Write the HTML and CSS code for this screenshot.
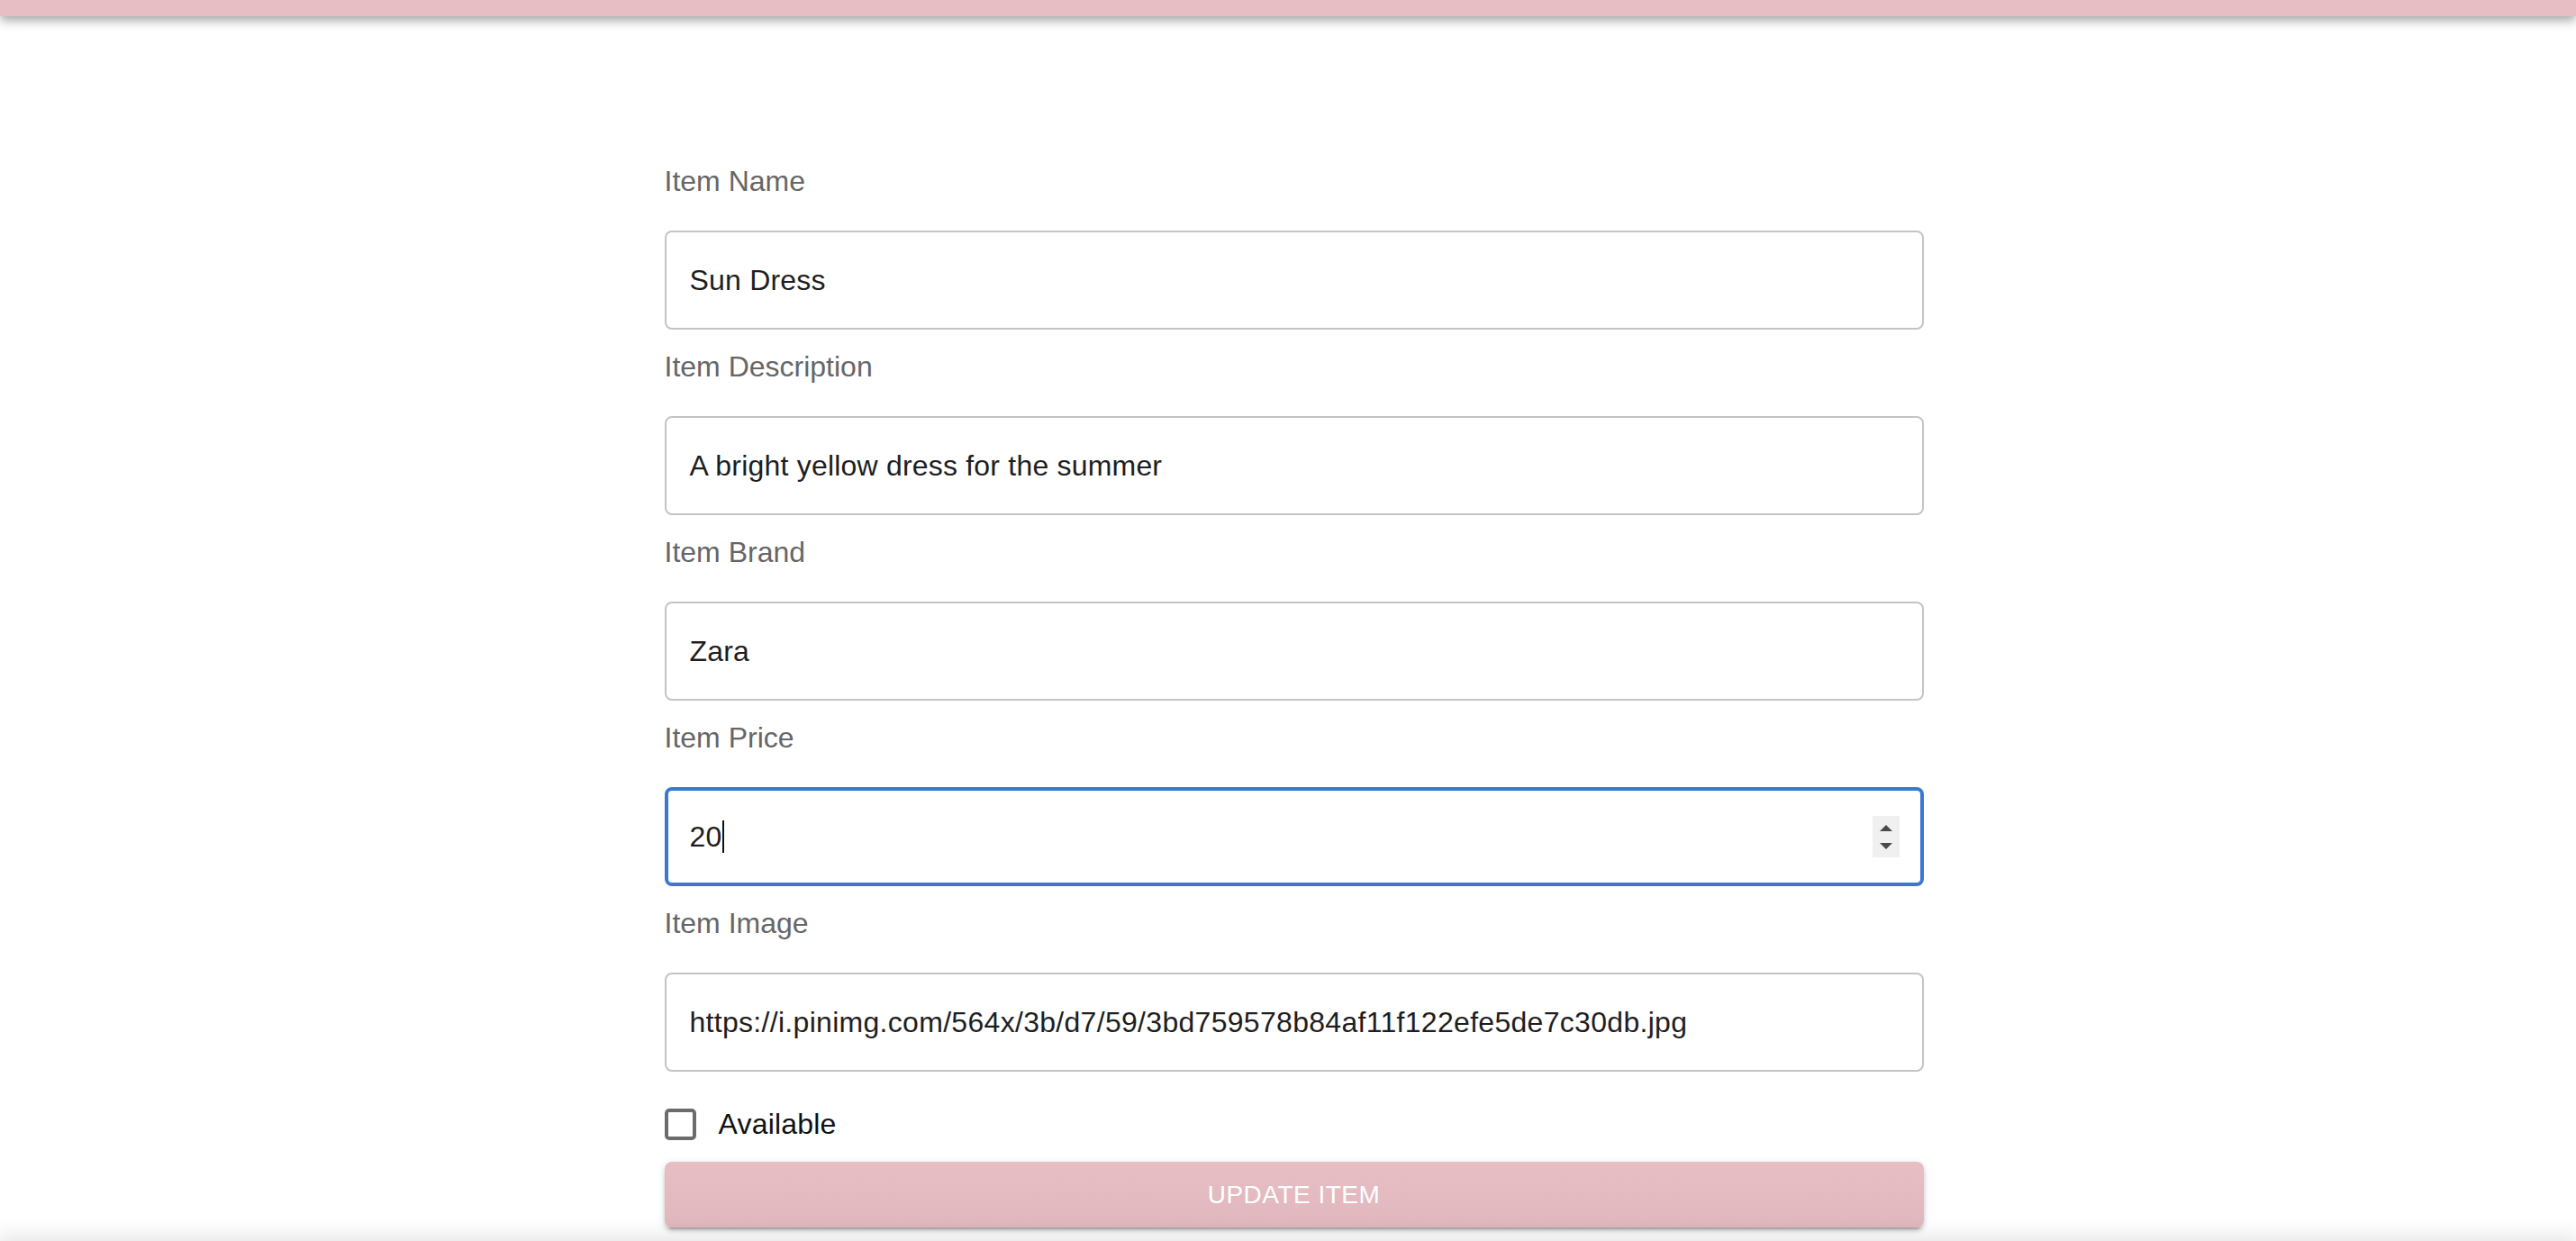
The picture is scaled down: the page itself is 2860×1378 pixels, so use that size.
FILE: index.html
```html
<!DOCTYPE html>
<html lang="en">
<head>
<meta charset="utf-8">
<title>Update Item</title>
<link rel="stylesheet" href="styles.css">
</head>
<body>
<header class="appbar"></header>
<main class="page">
  <form class="form">
    <div class="field">
      <label class="label">Item Name</label>
      <div class="input"><span class="value">Sun Dress</span></div>
    </div>
    <div class="field">
      <label class="label">Item Description</label>
      <div class="input"><span class="value">A bright yellow dress for the summer</span></div>
    </div>
    <div class="field">
      <label class="label">Item Brand</label>
      <div class="input"><span class="value">Zara</span></div>
    </div>
    <div class="field">
      <label class="label">Item Price</label>
      <div class="input focused">
        <span class="value">20</span><span class="caret"></span>
        <span class="spinner">
          <svg width="30" height="46" viewBox="0 0 30 46">
            <polygon points="8,17 22,17 15,10" fill="#4a4a4a"/>
            <polygon points="8,30 22,30 15,37" fill="#4a4a4a"/>
          </svg>
        </span>
      </div>
    </div>
    <div class="field">
      <label class="label">Item Image</label>
      <div class="input"><span class="value url">https://i.pinimg.com/564x/3b/d7/59/3bd759578b84af11f122efe5de7c30db.jpg</span></div>
    </div>
    <div class="check-row">
      <span class="checkbox"></span>
      <span class="check-label">Available</span>
    </div>
    <button type="button" class="submit">UPDATE ITEM</button>
  </form>
</main>
<footer class="bottom-bar"></footer>
</body>
</html>
```
FILE: styles.css
```css
html, body {
  margin: 0;
  padding: 0;
  background: #ffffff;
  font-family: "Liberation Sans", Arial, Helvetica, sans-serif;
}

body {
  overflow: hidden;
  height: 1378px;
}

.appbar {
  height: 18px;
  background: #e6bec4;
  box-shadow: 0 4px 8px -2px rgba(0,0,0,0.22), 0 8px 10px 0 rgba(0,0,0,0.12), 0 2px 20px 0 rgba(0,0,0,0.10);
  position: relative;
  z-index: 2;
}

.page {
  padding-top: 165px;
}

.form {
  width: 1411px;
  padding-left: 13px;
  box-sizing: border-box;
  margin: 0 auto;
  display: flex;
  flex-direction: column;
}

.field {
  display: flex;
  flex-direction: column;
  margin-bottom: 23px;
}

.label {
  font-size: 32px;
  line-height: 37px;
  color: #666666;
  margin-bottom: 36px;
}

.input {
  height: 110px;
  box-sizing: border-box;
  border: 2px solid #c4c4c4;
  border-radius: 8px;
  padding: 0 23px 0 26px;
  display: flex;
  align-items: center;
  font-size: 32px;
  color: #1e1e1e;
}

.value {
  letter-spacing: 0.2px;
}

.value.url {
  letter-spacing: 0.3px;
}

.input.focused {
  border: 4px solid #3b78d3;
  padding: 0 23px 0 24px;
}

.caret {
  display: inline-block;
  width: 2px;
  height: 36px;
  background: #111;
  margin-left: 0;
}

.spinner {
  margin-left: auto;
  width: 30px;
  height: 46px;
  background: #f0f0f0;
  display: flex;
}

.check-row {
  display: flex;
  align-items: center;
  height: 37px;
  margin-top: 17px;
}

.checkbox {
  width: 35px;
  height: 35px;
  box-sizing: border-box;
  border: 4px solid #6c6c6c;
  border-radius: 5px;
  margin-right: 25px;
}

.check-label {
  font-size: 32px;
  color: #111111;
  letter-spacing: 0.2px;
}

.submit {
  margin-top: 23px;
  height: 73px;
  border: none;
  border-radius: 8px;
  background: linear-gradient(#e6bec4, #dfb7bc);
  color: #ffffff;
  font-family: "Liberation Sans", Arial, Helvetica, sans-serif;
  font-size: 28px;
  letter-spacing: 0.5px;
  box-shadow: 0 6px 2px -4px rgba(0,0,0,0.2), 0 4px 4px 0 rgba(0,0,0,0.14), 0 2px 10px 0 rgba(0,0,0,0.12);
  padding: 0;
}

.bottom-bar {
  position: fixed;
  left: 0;
  right: 0;
  bottom: -60px;
  height: 60px;
  background: #eeeeee;
  box-shadow: 0 -2px 20px 4px rgba(0,0,0,0.10);
}
```
